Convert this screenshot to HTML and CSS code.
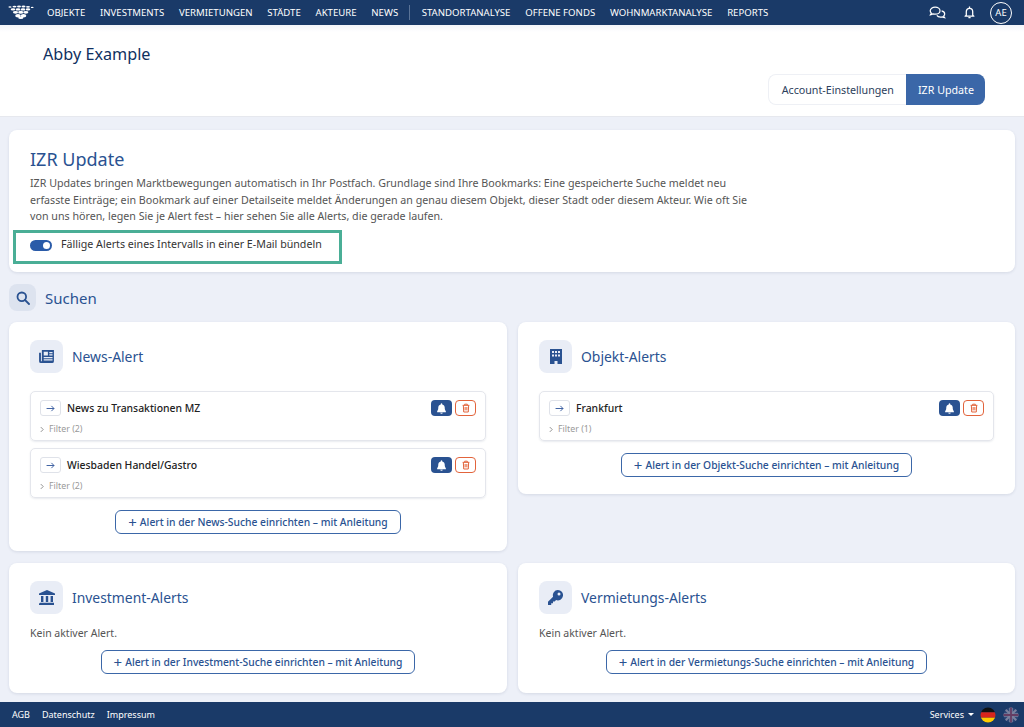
FILE: index.html
```html
<!DOCTYPE html>
<html lang="de">
<head>
  <meta charset="UTF-8">
  <meta name="viewport" content="width=device-width, initial-scale=1">
  <title>IZR Update</title>
  <link rel="stylesheet" href="styles.css">
</head>

<body>

<nav class="topbar">
  <svg class="logo" viewBox="0 0 26 14" width="26" height="14">
    <g fill="#fff">
      <ellipse cx="2" cy="2" rx="1.6" ry=".8"/><ellipse cx="6.500" cy="1.600" rx="2" ry=".9"/><ellipse cx="11" cy="1.600" rx="2" ry="1"/><ellipse cx="15.500" cy="1.600" rx="2" ry="1"/><ellipse cx="20" cy="1.800" rx="2" ry=".9"/><ellipse cx="24.200" cy="2.400" rx="1.400" ry=".7"/>
      <ellipse cx="5" cy="4.400" rx="2.300" ry="1.100"/><ellipse cx="10" cy="4.400" rx="2.300" ry="1.200"/><ellipse cx="15" cy="4.400" rx="2.300" ry="1.200"/><ellipse cx="20" cy="4.400" rx="2.300" ry="1.100"/>
      <ellipse cx="7.500" cy="7.300" rx="2.600" ry="1.400"/><ellipse cx="12.700" cy="7.300" rx="2.600" ry="1.500"/><ellipse cx="17.800" cy="7.300" rx="2.600" ry="1.400"/>
      <ellipse cx="10" cy="10.700" rx="2.800" ry="1.700"/><ellipse cx="15.500" cy="10.700" rx="2.800" ry="1.700"/>
      <ellipse cx="12.800" cy="12.800" rx="2.600" ry="1.200"/>
    </g>
  </svg>
  <div class="nav-links">
    <a>Objekte</a>
    <a>Investments</a>
    <a>Vermietungen</a>
    <a>Städte</a>
    <a>Akteure</a>
    <a>News</a>
    <span class="nav-sep"></span>
    <a>Standortanalyse</a>
    <a>Offene Fonds</a>
    <a>Wohnmarktanalyse</a>
    <a>Reports</a>
  </div>
  <div class="nav-icons">
    <svg viewBox="0 0 18 15" width="17" height="14" fill="none" stroke="#fff" stroke-width="1.300">
      <path d="M6.500 1.200c-3 0-5.300 1.700-5.300 3.900 0 1 .5 1.800 1.200 2.500-.2.800-.7 1.400-1 1.800 1.100-.1 2-.5 2.700-1 .7.300 1.500.4 2.400.4 3 0 5.200-1.700 5.200-3.800S9.500 1.200 6.500 1.200z"/>
      <path d="M13.400 5.200c1.900.4 3.300 1.700 3.300 3.300 0 .9-.4 1.600-1 2.200.1.800.6 1.400.9 1.800-1-.1-1.800-.5-2.400-.9-.6.200-1.300.3-2 .3-1.700 0-3.200-.7-3.900-1.800"/>
    </svg>
    <svg class="bell-top" viewBox="0 0 12 14" width="11" height="13" fill="none" stroke="#fff" stroke-width="1.400">
      <path d="M2.500 10V6.200C2.500 4 4 2.400 6 2.400S9.500 4 9.500 6.200V10l1.300 1H1.200z" stroke-linejoin="round"/>
      <path d="M6 .5v1.500M4.800 12.600h2.400"/>
    </svg>
    <div class="avatar">AE</div>
  </div>
</nav>

<header class="page-head">
  <h1>Abby Example</h1>
  <div class="tabs">
    <a class="tab">Account-Einstellungen</a>
    <a class="tab tab-active">IZR Update</a>
  </div>
</header>

<main class="content">
  <section class="card intro">
    <h2>IZR Update</h2>
    <p>IZR Updates bringen Marktbewegungen automatisch in Ihr Postfach. Grundlage sind Ihre Bookmarks: Eine gespeicherte Suche meldet neu erfasste Einträge; ein Bookmark auf einer Detailseite meldet Änderungen an genau diesem Objekt, dieser Stadt oder diesem Akteur. Wie oft Sie von uns hören, legen Sie je Alert fest – hier sehen Sie alle Alerts, die gerade laufen.</p>
    <div class="bundle">
      <span class="switch"></span>
      <span>Fällige Alerts eines Intervalls in einer E-Mail bündeln</span>
    </div>
  </section>

  <div class="section-head">
    <span class="icon-box icon-box-small">
      <svg viewBox="0 0 14 14" width="14" height="14" fill="none" stroke="#2a5291" stroke-width="1.800"><circle cx="5.800" cy="5.800" r="4.300"/><path d="M9 9l4 4" stroke-linecap="round"/></svg>
    </span>
    <span>Suchen</span>
  </div>

  <div class="alert-grid">
    <section class="card">
      <div class="card-head">
        <span class="icon-box">
          <svg viewBox="0 0 16 14" width="15" height="13"><path fill="#2a5291" d="M3 0h13v12a2 2 0 0 1-2 2H2a2 2 0 0 1-2-2V3h2v9h1z"/><path fill="#e9edf6" d="M5 2h4.500v4H5zM11 2.200h3.500v1.300H11zM11 4.700h3.500V6H11zM5 7.500h9.500v1.300H5zM5 10h9.500v1.300H5z"/></svg>
        </span>
        <h3>News-Alert</h3>
      </div>
      <div class="alert-item">
        <div class="alert-row">
          <span class="go-btn"><svg viewBox="0 0 10 8" width="9" height="7" fill="none" stroke="#3b5fa0" stroke-width="1.100"><path d="M.5 4h8.500M6 1l3 3-3 3"/></svg></span>
          <span class="alert-name">News zu Transaktionen MZ</span>
          <span class="alert-actions">
            <span class="act act-bell"><svg viewBox="0 0 12 14" width="9" height="11"><path fill="#fff" d="M6 0a1 1 0 0 1 1 1v.6c2 .4 3.300 2.100 3.300 4.200 0 3 .7 3.800 1.500 4.700V12H.2v-1.500C1 9.600 1.700 8.800 1.700 5.800 1.700 3.700 3 2 5 1.600V1a1 1 0 0 1 1-1zM4.300 12.600h3.400a1.700 1.400 0 0 1-3.400 0z"/></svg></span>
            <span class="act act-trash"><svg viewBox="0 0 12 14" width="8" height="10" fill="none" stroke="#e2643c" stroke-width="1.500"><path d="M1 3h10M4 3V1.300h4V3M2 3l.6 10h6.800L10 3M4.700 5.500v5M7.300 5.500v5"/></svg></span>
          </span>
        </div>
        <div class="filter"><svg class="chev" viewBox="0 0 5 8" width="4" height="7" fill="none" stroke="#777" stroke-width="1"><path d="M1 1l3 3-3 3"/></svg>Filter (2)</div>
      </div>
      <div class="alert-item">
        <div class="alert-row">
          <span class="go-btn"><svg viewBox="0 0 10 8" width="9" height="7" fill="none" stroke="#3b5fa0" stroke-width="1.100"><path d="M.5 4h8.500M6 1l3 3-3 3"/></svg></span>
          <span class="alert-name">Wiesbaden Handel/Gastro</span>
          <span class="alert-actions">
            <span class="act act-bell"><svg viewBox="0 0 12 14" width="9" height="11"><path fill="#fff" d="M6 0a1 1 0 0 1 1 1v.6c2 .4 3.300 2.100 3.300 4.200 0 3 .7 3.800 1.500 4.700V12H.2v-1.500C1 9.600 1.700 8.800 1.700 5.800 1.700 3.700 3 2 5 1.600V1a1 1 0 0 1 1-1zM4.300 12.600h3.400a1.700 1.400 0 0 1-3.400 0z"/></svg></span>
            <span class="act act-trash"><svg viewBox="0 0 12 14" width="8" height="10" fill="none" stroke="#e2643c" stroke-width="1.500"><path d="M1 3h10M4 3V1.300h4V3M2 3l.6 10h6.800L10 3M4.700 5.500v5M7.300 5.500v5"/></svg></span>
          </span>
        </div>
        <div class="filter"><svg class="chev" viewBox="0 0 5 8" width="4" height="7" fill="none" stroke="#777" stroke-width="1"><path d="M1 1l3 3-3 3"/></svg>Filter (2)</div>
      </div>
      <div class="btn-row"><a class="add-btn"><span class="plus">+</span> Alert in der News-Suche einrichten – mit Anleitung</a></div>
    </section>

    <section class="card">
      <div class="card-head">
        <span class="icon-box">
          <svg viewBox="0 0 12 15" width="12" height="15"><path fill="#2a5291" fill-rule="evenodd" d="M0 0h12v15H7.500v-3h-3v3H0zM2 2v2h2V2zM5 2v2h2V2zM8 2v2h2V2zM2 5.500v2h2v-2zM5 5.500v2h2v-2zM8 5.500v2h2v-2z"/></svg>
        </span>
        <h3>Objekt-Alerts</h3>
      </div>
      <div class="alert-item">
        <div class="alert-row">
          <span class="go-btn"><svg viewBox="0 0 10 8" width="9" height="7" fill="none" stroke="#3b5fa0" stroke-width="1.100"><path d="M.5 4h8.500M6 1l3 3-3 3"/></svg></span>
          <span class="alert-name">Frankfurt</span>
          <span class="alert-actions">
            <span class="act act-bell"><svg viewBox="0 0 12 14" width="9" height="11"><path fill="#fff" d="M6 0a1 1 0 0 1 1 1v.6c2 .4 3.300 2.100 3.300 4.200 0 3 .7 3.800 1.500 4.700V12H.2v-1.500C1 9.600 1.700 8.800 1.700 5.800 1.700 3.700 3 2 5 1.600V1a1 1 0 0 1 1-1zM4.300 12.600h3.400a1.700 1.400 0 0 1-3.400 0z"/></svg></span>
            <span class="act act-trash"><svg viewBox="0 0 12 14" width="8" height="10" fill="none" stroke="#e2643c" stroke-width="1.500"><path d="M1 3h10M4 3V1.300h4V3M2 3l.6 10h6.800L10 3M4.700 5.500v5M7.300 5.500v5"/></svg></span>
          </span>
        </div>
        <div class="filter"><svg class="chev" viewBox="0 0 5 8" width="4" height="7" fill="none" stroke="#777" stroke-width="1"><path d="M1 1l3 3-3 3"/></svg>Filter (1)</div>
      </div>
      <div class="btn-row"><a class="add-btn"><span class="plus">+</span> Alert in der Objekt-Suche einrichten – mit Anleitung</a></div>
    </section>

    <section class="card card-empty">
      <div class="card-head">
        <span class="icon-box">
          <svg viewBox="0 0 16 15" width="16" height="15"><path fill="#2a5291" d="M8 0l8 3.500V5H0V3.500zM2 6h2.400v6H2zM6.800 6h2.400v6H6.800zM11.600 6H14v6h-2.400zM1 12.700h14V15H0v-1.300z"/></svg>
        </span>
        <h3>Investment-Alerts</h3>
      </div>
      <p class="no-alert">Kein aktiver Alert.</p>
      <div class="btn-row"><a class="add-btn"><span class="plus">+</span> Alert in der Investment-Suche einrichten – mit Anleitung</a></div>
    </section>

    <section class="card card-empty">
      <div class="card-head">
        <span class="icon-box">
          <svg viewBox="0 0 15 15" width="15" height="15"><path fill="#2a5291" fill-rule="evenodd" d="M9.800 0a5.200 5.200 0 1 1-1.700 10.100L6.600 11.500H5v1.700H3.200V15H0v-3.200l5.100-5A5.200 5.200 0 0 1 9.800 0zm1.200 2.500a1.500 1.500 0 1 0 0 3 1.500 1.500 0 0 0 0-3z"/></svg>
        </span>
        <h3>Vermietungs-Alerts</h3>
      </div>
      <p class="no-alert">Kein aktiver Alert.</p>
      <div class="btn-row"><a class="add-btn"><span class="plus">+</span> Alert in der Vermietungs-Suche einrichten – mit Anleitung</a></div>
    </section>
  </div>
</main>

<footer class="footer">
  <a>AGB</a>
  <a>Datenschutz</a>
  <a>Impressum</a>
  <div class="footer-right">
    <span class="services">Services <i class="caret"></i></span>
    <svg viewBox="0 0 16 16" width="16" height="16" class="flag">
      <clipPath id="de"><circle cx="8" cy="8" r="7.500"/></clipPath>
      <g clip-path="url(#de)"><rect width="16" height="5.300" fill="#111"/><rect y="5.300" width="16" height="5.400" fill="#d8261c"/><rect y="10.700" width="16" height="5.300" fill="#fc0"/></g>
    </svg>
    <svg viewBox="0 0 16 16" width="16" height="16" class="flag flag-dim">
      <clipPath id="uk"><circle cx="8" cy="8" r="7.500"/></clipPath>
      <g clip-path="url(#uk)"><rect width="16" height="16" fill="#3d4f80"/><path d="M0 0l16 16M16 0L0 16" stroke="#c9bccb" stroke-width="2"/><path d="M8 0v16M0 8h16" stroke="#c9bccb" stroke-width="3.500"/><path d="M8 0v16M0 8h16" stroke="#a3405f" stroke-width="1.800"/></g>
    </svg>
  </div>
</footer>

</body>
</html>
```

FILE: styles.css
```css
* {
  box-sizing: border-box;
}
html, body {
  height: 100%;
}
body {
  font-family: "Noto Sans", "Open Sans", sans-serif;
  margin: 0;
  background: #edf0f8;
  color: #333;
  display: flex;
  flex-direction: column;
  height: 727px;
  overflow: hidden;
}
h1, h2, h3, p {
  margin: 0;
  font-weight: 400;
}

/* top navigation */
.topbar {
  height: 25px;
  flex: none;
  background: #1a3a68;
  display: flex;
  align-items: center;
  padding-left: 8px;
  padding-right: 12px;
}
.logo {
  flex: none;
  margin-bottom: 1px;
}
.nav-links {
  display: flex;
  align-items: center;
  gap: 14.750px;
  margin-left: 13px;
  font-size: 9.600px;
  color: #fff;
  text-transform: uppercase;
}
.nav-sep {
  width: 1px;
  height: 15px;
  background: #5a7397;
  margin: 0 -3px 0 -4px;
}
.nav-icons {
  margin-left: auto;
  display: flex;
  align-items: center;
}
.bell-top {
  margin-left: 18px;
  margin-right: 15px;
}
.avatar {
  width: 22px;
  height: 22px;
  border: 1px solid #fff;
  border-radius: 50%;
  color: #fff;
  font-size: 9.500px;
  display: flex;
  align-items: center;
  justify-content: center;
}

/* name and tabs */
.page-head {
  height: 92px;
  flex: none;
  background: linear-gradient(#f3f5fb, #fff 7px);
  border-bottom: 1px solid #e6e8ee;
  padding: 17px 39px 11px 43px;
  display: flex;
  flex-direction: column;
}
.page-head h1 {
  font-size: 16.200px;
  line-height: 24px;
  color: #10305f;
}
.tabs {
  margin-top: auto;
  align-self: flex-end;
  display: flex;
  font-size: 10.700px;
}
.tab {
  height: 31px;
  display: flex;
  align-items: center;
  padding: 0 12px 0 13px;
  color: #2c3e5c;
  border: 1px solid #eef0f5;
  border-right: 0;
  border-radius: 8px 0 0 8px;
}
.tab-active {
  color: #fff;
  background: #3b67a8;
  border: 0;
  padding: 0 11px 0 12px;
  border-radius: 0 8px 8px 0;
}

/* main area */
.content {
  flex: 1;
  padding: 13px 9px 0;
}
.card {
  background: #fff;
  border-radius: 8px;
  box-shadow: 0 1px 3px rgba(40, 60, 100, .12);
  padding: 18px 21px 17px;
}
.card-empty {
  padding-bottom: 19px;
}
.intro {
  height: 142px;
  padding-top: 17px;
  position: relative;
}
.intro h2 {
  font-size: 18px;
  line-height: 24px;
  color: #2a5291;
}
.intro p {
  width: 730px;
  margin-top: 4px;
  font-size: 10.700px;
  line-height: 16.500px;
  color: #555;
}
.bundle {
  display: flex;
  align-items: center;
  gap: 9px;
  width: 329px;
  height: 34px;
  margin: 5px 0 0 -17px;
  padding-left: 14px;
  padding-bottom: 6px;
  border: 3px solid #4aae96;
  font-size: 10.670px;
  color: #333;
}
.switch {
  width: 22px;
  height: 11px;
  border-radius: 6px;
  background: #2a5ba8;
  position: relative;
  flex: none;
  margin-top: 3px;
}
.switch::after {
  content: "";
  position: absolute;
  right: 2px;
  top: 2px;
  width: 7px;
  height: 7px;
  border-radius: 50%;
  background: #fff;
}
.section-head {
  display: flex;
  align-items: center;
  gap: 9px;
  margin: 12px 0 11px;
  font-size: 15px;
  color: #2a5291;
}
.icon-box {
  width: 33px;
  height: 33px;
  border-radius: 8px;
  background: #e9edf6;
  display: flex;
  align-items: center;
  justify-content: center;
  flex: none;
}
.icon-box-small {
  width: 27px;
  height: 27px;
  background: #dde3ef;
}

.alert-grid {
  display: grid;
  grid-template-columns: 498px 497px;
  gap: 12px 11px;
  align-items: start;
}
.card-head {
  display: flex;
  align-items: center;
  gap: 9px;
  margin-bottom: 18px;
}
.card-head h3 {
  font-size: 13.900px;
  color: #2a5291;
  padding-bottom: 1px;
}
.alert-item {
  height: 50px;
  border: 1px solid #e4e6ec;
  border-radius: 5px;
  box-shadow: 0 1px 2px rgba(40, 60, 100, .1);
  padding: 8px 9px 0;
  margin-bottom: 7px;
}
.alert-row {
  display: flex;
  align-items: center;
  gap: 6px;
}
.go-btn {
  width: 21px;
  height: 16px;
  border: 1px solid #dfe2e9;
  border-radius: 3px;
  display: flex;
  align-items: center;
  justify-content: center;
}
.alert-name {
  font-size: 10.400px;
  font-weight: 500;
  color: #222;
  padding-bottom: 1px;
}
.alert-actions {
  margin-left: auto;
  display: flex;
  gap: 3px;
}
.act {
  width: 21px;
  height: 16px;
  border-radius: 4px;
  display: flex;
  align-items: center;
  justify-content: center;
}
.act-bell {
  background: #2a5291;
}
.act-trash {
  border: 1px solid #e2643c;
}
.filter {
  margin-top: 7px;
  font-size: 8.800px;
  line-height: 12px;
  color: #999;
  display: flex;
  align-items: center;
  gap: 5px;
}
.btn-row {
  display: flex;
  justify-content: center;
  margin-top: 12px;
}
.add-btn {
  height: 24px;
  padding: 0 12px;
  display: flex;
  align-items: center;
  gap: 3px;
  border: 1px solid #3b67a8;
  border-radius: 6px;
  color: #2a5291;
  font-size: 10.300px;
  font-weight: 500;
}
.plus {
  font-size: 15px;
  font-weight: 400;
  line-height: 1;
}
.no-alert {
  font-size: 10.500px;
  line-height: 14px;
  color: #555;
  margin-top: -6px;
}
.no-alert + .btn-row {
  margin-top: 10px;
}

/* footer */
.footer {
  height: 25px;
  flex: none;
  background: #1a3a68;
  color: #fff;
  display: flex;
  align-items: center;
  gap: 12px;
  padding: 0 5px 0 12px;
  font-size: 9px;
}
.footer-right {
  margin-left: auto;
  display: flex;
  align-items: center;
  gap: 7px;
}
.services {
  display: flex;
  align-items: center;
  gap: 4px;
  margin-right: -1px;
}
.caret {
  width: 0;
  height: 0;
  border-left: 3px solid transparent;
  border-right: 3px solid transparent;
  border-top: 3px solid #fff;
}
.flag-dim {
  opacity: .55;
}
```
